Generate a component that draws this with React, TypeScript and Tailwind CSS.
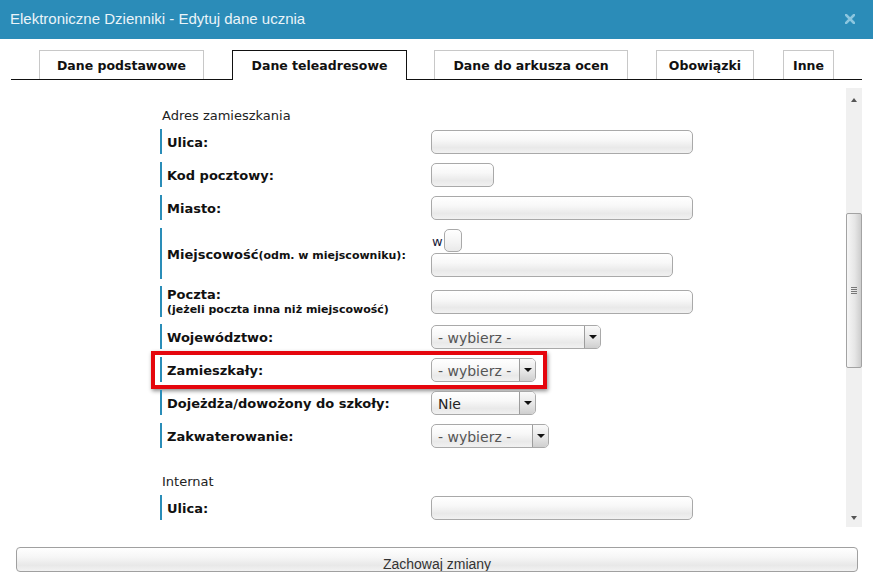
const inputBg =
  'bg-[linear-gradient(180deg,#ffffff_0%,#f8f8f8_40%,#e9e9e9_75%,#f1f1f1_100%)]';

function TextInput({ w }: { w: string }) {
  return <div className={`${w} h-[24px] rounded-[5px] border border-[#a9a9a9] ${inputBg}`} />;
}

function Select({ w, text, muted = true }: { w: string; text: string; muted?: boolean }) {
  return (
    <div className={`${w} h-[24px] flex rounded-[5px] border border-[#a9a9a9] ${inputBg} overflow-hidden`}>
      <span
        className={`flex-1 flex items-center pl-[6px] pt-[2px] text-[14px] leading-none ${
          muted ? 'text-[#555]' : 'text-[#222]'
        }`}
      >
        {text}
      </span>
      <span className="w-[16px] h-full flex items-center justify-center border-l border-[#9d9d9d] bg-[linear-gradient(180deg,#fafafa,#e4e4e4_60%,#cfcfcf)]">
        <span className="w-0 h-0 border-l-[4px] border-r-[4px] border-t-[4px] border-l-transparent border-r-transparent border-t-[#111]" />
      </span>
    </div>
  );
}

function Row({
  label,
  sub,
  h = 'h-[25px]',
  mt = 'mt-[8px]',
  stack = false,
  children,
}: {
  label: string;
  sub?: string;
  h?: string;
  mt?: string;
  stack?: boolean;
  children: React.ReactNode;
}) {
  return (
    <div className={`relative flex items-center ${h} ${mt}`}>
      <div
        className={`w-[271px] h-full border-l-2 border-[#2a8db8] pl-[5px] flex ${
          stack ? 'flex-col justify-center' : 'items-center pt-[2px]'
        } font-bold text-[13px] text-[#111]`}
      >
        {stack ? (
          <>
            <span className="leading-[15px]">{label}</span>
            <span className="text-[11px] leading-[15px]">{sub}</span>
          </>
        ) : (
          <span>
            {label}
            {sub && <span className="text-[11px]">{sub}</span>}
          </span>
        )}
      </div>
      {children}
    </div>
  );
}

const tabs = [
  { name: 'Dane podstawowe', w: 'w-[165px]', ml: 'ml-[28px]' },
  { name: 'Dane teleadresowe', w: 'w-[175px]', ml: 'ml-[28px]', active: true },
  { name: 'Dane do arkusza ocen', w: 'w-[194px]', ml: 'ml-[27px]' },
  { name: 'Obowiązki', w: 'w-[98px]', ml: 'ml-[28px]' },
  { name: 'Inne', w: 'w-[51px]', ml: 'ml-[29px]' },
];

export default function App() {
  return (
    <div className="w-[873px] h-[587px] bg-white flex flex-col overflow-hidden font-['DejaVu_Sans',sans-serif]">
      <div className="h-[39px] shrink-0 bg-[#2b8cb8] flex items-center justify-between pl-[10px] pr-[18px] font-['Liberation_Sans',Arial,sans-serif]">
        <span className="text-[15px] text-[#eaf4f9]">Elektroniczne Dzienniki - Edytuj dane ucznia</span>
        <svg width="10" height="10" viewBox="0 0 10 10" className="mt-[-1px]">
          <path d="M1 1 L9 9 M9 1 L1 9" stroke="#8cc6df" strokeWidth="2.6" strokeLinecap="square" />
        </svg>
      </div>

      <div className="mt-[11px] ml-[11px] w-[851px] h-[30px] shrink-0 flex items-end border-b border-[#111]">
        {tabs.map((t) => (
          <div
            key={t.name}
            className={`${t.ml} ${t.w} flex items-center justify-center pt-[2px] font-bold text-[12.5px] text-[#111] border border-b-0 bg-white ${
              t.active ? 'h-[30px] -mb-px border-[#111]' : 'h-[29px] border-[#c8c8c8]'
            }`}
          >
            {t.name}
          </div>
        ))}
      </div>

      <div className="mt-[8px] ml-[12px] w-[850px] h-[439px] shrink-0 flex">
        <div className="flex-1 overflow-hidden pl-[148px] pt-[20px]">
          <div className="ml-[2px] text-[13px] leading-[16px] text-[#222]">Adres zamieszkania</div>
          <Row label="Ulica:" mt="mt-[5px]">
            <TextInput w="w-[262px]" />
          </Row>
          <Row label="Kod pocztowy:">
            <TextInput w="w-[63px]" />
          </Row>
          <Row label="Miasto:">
            <TextInput w="w-[262px]" />
          </Row>
          <Row label="Miejscowość" sub="(odm. w miejscowniku):" h="h-[51px]">
            <div className="flex flex-col self-start pt-[1px]">
              <div className="flex items-center h-[23px]">
                <span className="text-[13px] text-[#1a1a3a] ml-[1px] mr-[1px] pt-[2px]">w</span>
                <div className="w-[18px] h-[23px] rounded-[5px] border border-[#a9a9a9] bg-[linear-gradient(180deg,#fff,#f3f3f3_60%,#e9e9e9)]" />
              </div>
              <div className="mt-[1px]">
                <TextInput w="w-[242px]" />
              </div>
            </div>
          </Row>
          <Row label="Poczta:" sub="(jeżeli poczta inna niż miejscowość)" h="h-[31px]" mt="mt-[7px]" stack>
            <TextInput w="w-[262px]" />
          </Row>
          <Row label="Województwo:" mt="mt-[7px]">
            <Select w="w-[170px]" text="- wybierz -" />
          </Row>
          <Row label="Zamieszkały:">
            <Select w="w-[105px]" text="- wybierz -" />
            <div className="absolute -top-[6px] -left-[9px] w-[396px] h-[38px] border-[4px] border-[#e5060d] shadow-[1px_2px_4px_rgba(0,0,0,0.45)] pointer-events-none" />
          </Row>
          <Row label="Dojeżdża/dowożony do szkoły:">
            <Select w="w-[105px]" text="Nie" muted={false} />
          </Row>
          <Row label="Zakwaterowanie:">
            <Select w="w-[118px]" text="- wybierz -" />
          </Row>
          <div className="mt-[26px] ml-[2px] text-[13px] leading-[16px] text-[#222]">Internat</div>
          <Row label="Ulica:" mt="mt-[5px]">
            <TextInput w="w-[262px]" />
          </Row>
        </div>

        <div className="w-[16px] h-full flex flex-col bg-[#f0f0f0]">
          <div className="h-[24px] flex items-center justify-center">
            <span className="w-0 h-0 border-l-[3px] border-r-[3px] border-b-[4px] border-l-transparent border-r-transparent border-b-[#555]" />
          </div>
          <div className="h-[101px]" />
          <div className="h-[155px] border border-[#a3a3a3] rounded-[2px] bg-[linear-gradient(90deg,#f6f6f6,#e6e6e6_55%,#cdcdcd)] flex flex-col items-center justify-center gap-[1px]">
            <span className="w-[6px] h-px bg-[#777]" />
            <span className="w-[6px] h-px bg-[#777]" />
            <span className="w-[6px] h-px bg-[#777]" />
            <span className="w-[6px] h-px bg-[#777]" />
          </div>
          <div className="flex-1" />
          <div className="h-[18px] flex items-center justify-center">
            <span className="w-0 h-0 border-l-[3px] border-r-[3px] border-t-[4px] border-l-transparent border-r-transparent border-t-[#555]" />
          </div>
        </div>
      </div>

      <div className="mt-[20px] ml-[16px] w-[842px] h-[25px] shrink-0 rounded-[4px] border border-[#a0a0a0] bg-[linear-gradient(180deg,#ffffff,#f6f6f6_40%,#e8e8e8_75%,#f2f2f2)] flex justify-center pt-[8px] overflow-hidden font-['Liberation_Sans',Arial,sans-serif] text-[14px] leading-[16px] text-[#333]">
        Zachowaj zmiany
      </div>
    </div>
  );
}
